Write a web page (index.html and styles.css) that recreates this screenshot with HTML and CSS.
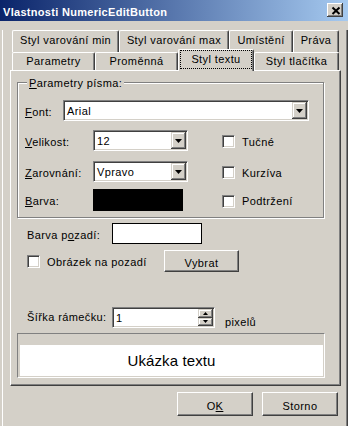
FILE: index.html
```html
<!DOCTYPE html>
<html>
    <head>
        <meta charset="UTF-8">
        <meta name="viewport" content="width=device-width, initial-scale=1.0">
        <title>Vlastnosti NumericEditButton</title>
        <link rel="stylesheet" href="styles.css">
    </head>
    <body>
        <div class="titlebar">
            <span class="title">Vlastnosti NumericEditButton</span>
            <span class="close-btn">
                <svg width="16" height="14" viewBox="0 0 16 14"><path d="M5.5 4.5 L12.5 11 M12.5 4.5 L5.5 11" stroke="#000" stroke-width="2" fill="none"/></svg>
            </span>
        </div>
        <div class="frame">
            <div class="tabs">
                <div class="tab-row back">
                    <div class="tab t-min">Styl varování min</div>
                    <div class="tab t-max">Styl varování max</div>
                    <div class="tab t-pos">Umístění</div>
                    <div class="tab t-rights">Práva</div>
                </div>
                <div class="tab-row front">
                    <div class="tab t-params">Parametry</div>
                    <div class="tab t-var">Proměnná</div>
                    <div class="tab t-text active"><span class="focus">Styl textu</span></div>
                    <div class="tab t-button">Styl tlačítka</div>
                </div>
            </div>
            <div class="panel">
                <div class="group">
                    <div class="group-title"><u>P</u>arametry písma:</div>
                    <div class="row row-font">
                        <span class="lbl"><u>F</u>ont:</span>
                        <div class="combo combo-font">
                            <span class="combo-value">Arial</span>
                            <span class="combo-btn"><svg width="7" height="4" viewBox="0 0 7 4"><path d="M0 0h7L3.5 4z"/></svg></span>
                        </div>
                    </div>
                    <div class="row row-size">
                        <span class="lbl wide"><u>V</u>elikost:</span>
                        <div class="combo combo-small">
                            <span class="combo-value">12</span>
                            <span class="combo-btn"><svg width="7" height="4" viewBox="0 0 7 4"><path d="M0 0h7L3.5 4z"/></svg></span>
                        </div>
                        <div class="opt">
                            <span class="check"></span>
                            <span class="opt-text">Tučné</span>
                        </div>
                    </div>
                    <div class="row row-align">
                        <span class="lbl wide"><u>Z</u>arovnání:</span>
                        <div class="combo combo-small">
                            <span class="combo-value">Vpravo</span>
                            <span class="combo-btn"><svg width="7" height="4" viewBox="0 0 7 4"><path d="M0 0h7L3.5 4z"/></svg></span>
                        </div>
                        <div class="opt">
                            <span class="check"></span>
                            <span class="opt-text">Kurzíva</span>
                        </div>
                    </div>
                    <div class="row row-color">
                        <span class="lbl wide"><u>B</u>arva:</span>
                        <div class="swatch"></div>
                        <div class="opt">
                            <span class="check"></span>
                            <span class="opt-text">Podtržení</span>
                        </div>
                    </div>
                </div>

                <div class="line bg-row">
                    <span class="line-lbl">Barva p<u>o</u>zadí:</span>
                    <div class="color-box"></div>
                </div>
                <div class="line img-row">
                    <div class="opt img-opt">
                        <span class="check"></span>
                        <span class="opt-text">Obrázek na pozadí</span>
                    </div>
                    <div class="btn btn-pick">Vybrat</div>
                </div>
                <div class="line border-row">
                    <span class="line-lbl">Šířka rámečku:</span>
                    <div class="spin-field">
                        <span class="spin-value">1</span>
                        <span class="spin">
                            <span class="spin-btn"><svg width="5" height="3" viewBox="0 0 5 3"><path d="M0 3h5L2.5 0z"/></svg></span>
                            <span class="spin-btn"><svg width="5" height="3" viewBox="0 0 5 3"><path d="M0 0h5L2.5 3z"/></svg></span>
                        </span>
                    </div>
                    <span class="unit">pixelů</span>
                </div>
                <div class="preview">
                    <div class="preview-text">Ukázka textu</div>
                </div>
            </div>
            <div class="buttons">
                <div class="btn">O<u>K</u></div>
                <div class="btn">Storno</div>
            </div>
        </div>
    </body>
</html>
```

FILE: styles.css
```css
body {
    margin: 0;
    width: 348px;
    height: 426px;
    overflow: hidden;
    background-color: #d4d0c8;
    font-family: "Liberation Sans", Arial, sans-serif;
    font-size: 11px;
    line-height: 13px;
    letter-spacing: 0.4px;
    color: #000;
}
u {
    text-decoration: underline;
}

/* title bar */
.titlebar {
    display: flex;
    height: 21px;
    background: linear-gradient(to right, #0a246a, #a6caf0);
    color: #fff;
}
.title {
    margin: 6px 0 0 3px;
    font-weight: bold;
    letter-spacing: 0.3px;
}
.close-btn {
    display: block;
    width: 16px;
    height: 14px;
    margin: 3px 5px 0 auto;
    background-color: #d4d0c8;
    box-shadow: inset -1px -1px #404040, inset 1px 1px #fff, inset -2px -2px #808080;
}
.close-btn svg {
    display: block;
}

/* window frame */
.frame {
    box-sizing: border-box;
    height: 405px;
    margin-left: 2px;
    border-left: 1px solid #fff;
    border-right: 1px solid #404040;
    border-bottom: 1px solid #404040;
    box-shadow: inset -1px -1px #808080;
}

/* tabs */
.tabs {
    margin: 9px 0 0 9px;
}
.tab-row {
    display: flex;
}
.tab-row.back {
    height: 22px;
}
.tab-row.front {
    height: 20px;
    margin-top: -2px;
    align-items: flex-end;
}
.tab {
    box-sizing: border-box;
    height: 100%;
    padding-top: 3px;
    border-top: 1px solid #fff;
    border-left: 1px solid #fff;
    border-right: 1px solid #404040;
    border-radius: 2px 2px 0 0;
    box-shadow: inset -1px 0 #808080;
    background-color: #d4d0c8;
    text-align: center;
    white-space: nowrap;
}
.front .tab {
    height: 18px;
    padding-top: 2px;
}
.front .tab.active {
    position: relative;
    z-index: 1;
    height: 22px;
    margin-bottom: -1px;
    padding-top: 0;
}
.focus {
    display: block;
    height: 19px;
    box-sizing: border-box;
    margin: 0 1px;
    padding-top: 2px;
    border: 1px dotted #000;
}
.t-min { width: 107px; }
.t-max { width: 110px; }
.t-pos { width: 64px; }
.t-rights { width: 46px; }
.t-params { width: 83px; }
.t-var { width: 83px; }
.t-text { width: 76px; }
.t-button { width: 85px; }

/* page */
.panel {
    box-sizing: border-box;
    width: 331px;
    height: 316px;
    margin-left: 7px;
    border: 1px solid;
    border-color: #fff #404040 #404040 #fff;
    box-shadow: inset -1px -1px #808080;
}
.group {
    box-sizing: border-box;
    width: 307px;
    margin: 11px 0 5px 6px;
    padding: 0 0 6px 7px;
    border: 1px solid #808080;
    box-shadow: 1px 1px 0 #fff, inset 1px 1px 0 #fff;
}
.group-title {
    width: fit-content;
    margin: -6px 0 0 2px;
    padding: 0 2px;
    background-color: #d4d0c8;
}
.row {
    display: flex;
    align-items: center;
    height: 21px;
}
.row-font { margin-top: 10px; }
.row-size { margin-top: 9px; }
.row-align { margin-top: 10px; }
.row-color {
    margin-top: 7px;
    height: 22px;
}
.lbl {
    width: 38px;
    padding-top: 3px;
}
.lbl.wide {
    width: 68px;
}

.combo {
    box-sizing: border-box;
    display: flex;
    height: 21px;
    padding: 1px;
    background-color: #fff;
    border: 1px solid;
    border-color: #808080 #fff #fff #808080;
    box-shadow: inset 1px 1px #404040, inset -1px -1px #d4d0c8;
}
.combo-font { width: 246px; }
.combo-small { width: 95px; }
.combo-value {
    flex: 1;
    padding: 2px 0 0 2px;
    align-self: center;
}
.combo-btn {
    display: flex;
    align-items: center;
    justify-content: center;
    width: 15px;
    background-color: #d4d0c8;
    box-shadow: inset -1px -1px #404040, inset 1px 1px #d4d0c8, inset -2px -2px #808080, inset 2px 2px #fff;
}
.combo-btn svg,
.spin-btn svg {
    display: block;
}

.opt {
    display: flex;
    align-items: center;
    width: 101px;
    margin-left: auto;
}
.check {
    box-sizing: border-box;
    flex: none;
    width: 13px;
    height: 13px;
    margin-top: 2px;
    background-color: #fff;
    border: 1px solid;
    border-color: #808080 #fff #fff #808080;
    box-shadow: inset 1px 1px #404040, inset -1px -1px #d4d0c8;
}
.opt-text {
    margin-left: 7px;
    padding-top: 3px;
}
.swatch {
    width: 90px;
    height: 22px;
    background-color: #000;
}

/* lines under the group */
.line {
    display: flex;
    align-items: center;
    padding-left: 16px;
}
.line-lbl {
    width: 85px;
}
.bg-row {
    height: 21px;
}
.bg-row .line-lbl {
    padding-top: 4px;
}
.color-box {
    box-sizing: border-box;
    width: 90px;
    height: 21px;
    border: 1px solid #000;
    background-color: #fff;
}
.img-row {
    height: 22px;
    margin-top: 6px;
}
.img-opt {
    width: 137px;
    margin-left: 0;
}
.img-opt .check {
    margin-top: 0;
}
.border-row {
    height: 21px;
    margin-top: 35px;
}
.spin-field {
    box-sizing: border-box;
    display: flex;
    width: 103px;
    height: 21px;
    padding: 1px;
    background-color: #fff;
    border: 1px solid;
    border-color: #808080 #fff #fff #808080;
    box-shadow: inset 1px 1px #404040, inset -1px -1px #d4d0c8;
}
.spin-value {
    flex: 1;
    padding: 3px 0 0 2px;
}
.spin {
    display: flex;
    flex-direction: column;
    width: 15px;
}
.spin-btn {
    flex: 1;
    display: flex;
    align-items: center;
    justify-content: center;
    background-color: #d4d0c8;
    box-shadow: inset -1px -1px #404040, inset 1px 1px #d4d0c8, inset -2px -2px #808080, inset 2px 2px #fff;
}
.unit {
    align-self: flex-start;
    margin: 9px 0 0 10px;
}

.preview {
    box-sizing: border-box;
    width: 308px;
    height: 45px;
    margin: 5px 0 0 6px;
    padding: 11px 1px 1px 2px;
    border: 1px solid;
    border-color: #808080 #fff #fff #808080;
}
.preview-text {
    display: flex;
    align-items: center;
    justify-content: center;
    height: 100%;
    background-color: #fff;
    font-size: 15px;
    line-height: 17px;
    letter-spacing: 0.1px;
}

/* buttons */
.btn {
    box-sizing: border-box;
    display: flex;
    align-items: center;
    justify-content: center;
    width: 76px;
    height: 24px;
    padding-top: 4px;
    border: 1px solid;
    border-color: #fff #404040 #404040 #fff;
    box-shadow: inset -1px -1px #808080;
}
.btn-pick {
    width: 75px;
    height: 22px;
}
.buttons {
    display: flex;
    justify-content: flex-end;
    gap: 9px;
    margin-top: 6px;
    padding-right: 9px;
}
```
